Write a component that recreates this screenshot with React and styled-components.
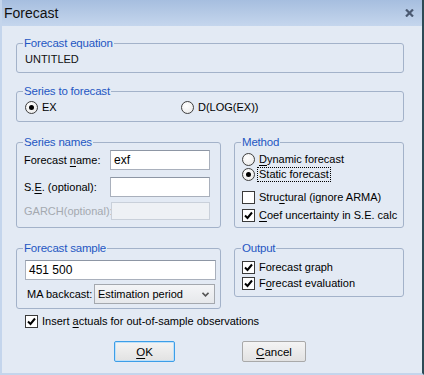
import React from "react";
import styled, { createGlobalStyle } from "styled-components";

const GlobalStyle = createGlobalStyle`
  html, body {
    margin: 0;
    padding: 0;
    background: #e3eaf4;
  }
  body {
    font-family: "Liberation Sans", Arial, sans-serif;
    font-size: 11px;
    color: #000;
  }
  * {
    box-sizing: border-box;
  }
`;

const Window = styled.div`
  width: 424px;
  height: 375px;
  display: flex;
  flex-direction: column;
  background: #e3eaf4;
  border-left: 2px solid #c4d5ec;
  border-right: 2px solid #2d4a55;
  border-bottom: 2px solid #c4d5ec;
  overflow: hidden;
`;

const TitleBar = styled.div`
  height: 26px;
  flex: none;
  display: flex;
  align-items: center;
  justify-content: space-between;
  padding: 0 8px 0 2px;
  background: linear-gradient(#a6bedf, #c5d6ed);
  font-size: 14px;
  color: #111;
`;

const Body = styled.div`
  display: flex;
  flex-direction: column;
  padding: 10px 18px 0 14px;
`;

const Group = styled.fieldset`
  margin: 0;
  padding: 0;
  min-width: 0;
  width: ${(p) => p.$width || "auto"};
  border: 1px solid #a3b2c9;
  border-radius: 3px;
  margin-top: ${(p) => p.$top || 0}px;
  align-self: flex-start;
`;

const Legend = styled.legend`
  margin-left: 6px;
  padding: 0 1px;
  line-height: 14px;
  font-size: 11.5px;
  color: #1f57c3;
  letter-spacing: -0.2px;
`;

const Inner = styled.div`
  display: flex;
  flex-direction: column;
  padding: ${(p) => p.$pad};
`;

const Row = styled.div`
  display: flex;
  align-items: center;
  height: ${(p) => p.$h || 15}px;
  margin-top: ${(p) => p.$mt || 0}px;
  padding-left: ${(p) => p.$pl || 0}px;
`;

const Plain = styled.div`
  line-height: 13px;
  color: #111;
`;

const FieldLabel = styled.label`
  width: ${(p) => p.$w}px;
  flex: none;
  padding-left: ${(p) => p.$pl || 0}px;
  color: ${(p) => (p.$disabled ? "#a4a9b0" : "#000")};
  white-space: nowrap;
`;

const TextBox = styled.div`
  width: ${(p) => p.$w}px;
  height: ${(p) => p.$h || 20}px;
  background: ${(p) => (p.$disabled ? "#eef1f5" : "#fff")};
  border: 1px solid ${(p) => (p.$disabled ? "#c9d0da" : "#a9b0bc")};
  border-top-color: ${(p) => (p.$disabled ? "#c9d0da" : "#8d96a4")};
  padding: 0 3px;
  display: flex;
  align-items: center;
  font-size: 12px;
  line-height: 14px;
`;

const Select = styled.div`
  width: 121px;
  height: 20px;
  background: linear-gradient(#f4f5f7, #e6e8eb);
  border: 1px solid #a4a8ae;
  display: flex;
  align-items: center;
  justify-content: space-between;
  padding: 0 5px 0 3px;
  font-size: 11px;
`;

const RadioCircle = styled.span`
  width: 13px;
  height: 13px;
  flex: none;
  border-radius: 50%;
  border: 1px solid #3e3e3e;
  background: radial-gradient(circle at 40% 35%, #fff, #e6e6e6);
  display: flex;
  align-items: center;
  justify-content: center;
  margin-right: 3px;
  &::after {
    content: "";
    width: 5px;
    height: 5px;
    border-radius: 50%;
    background: #000;
    display: ${(p) => (p.$on ? "block" : "none")};
  }
`;

const CheckSquare = styled.span`
  width: 13px;
  height: 13px;
  flex: none;
  border: 1px solid #3a3a3a;
  background: #fff;
  display: flex;
  align-items: center;
  justify-content: center;
  margin-right: 3px;
`;

const Opt = styled.span`
  display: flex;
  align-items: center;
  width: ${(p) => (p.$w ? p.$w + "px" : "auto")};
  white-space: nowrap;
`;

const Caption = styled.span`
  padding: 0 1px;
  outline: ${(p) => (p.$focus ? "1px dotted #000" : "none")};
  line-height: 13px;
`;

const Columns = styled.div`
  display: flex;
  align-items: flex-start;
  gap: 13px;
  margin-top: ${(p) => p.$top}px;
`;

const Buttons = styled.div`
  display: flex;
  gap: 67px;
  padding-left: 98px;
  margin-top: 13px;
`;

const Button = styled.div`
  width: ${(p) => p.$w}px;
  height: 21px;
  display: flex;
  align-items: center;
  justify-content: center;
  border: 1px solid ${(p) => (p.$default ? "#3c9ee8" : "#a9a9a9")};
  border-radius: 2px;
  background: linear-gradient(#f4f4f4, #e2e2e2);
  box-shadow: ${(p) => (p.$default ? "inset 0 0 0 1px #bfe0f8" : "none")};
  font-size: 11.5px;
`;

const U = styled.u`
  text-decoration-thickness: 1px;
  text-underline-offset: 2px;
`;

const Radio = ({ on, children, w, focus }) => (
  <Opt $w={w}>
    <RadioCircle $on={on} />
    <Caption $focus={focus}>{children}</Caption>
  </Opt>
);

const Check = ({ on, children }) => (
  <Opt>
    <CheckSquare>
      {on && (
        <svg width="9" height="9" viewBox="0 0 9 9">
          <path d="M1 4.5 L3.5 7 L8 1.5" fill="none" stroke="#000" strokeWidth="2" />
        </svg>
      )}
    </CheckSquare>
    <Caption>{children}</Caption>
  </Opt>
);

export default function App() {
  return (
    <>
      <GlobalStyle />
      <Window>
        <TitleBar>
          <span>Forecast</span>
          <svg width="9" height="8" viewBox="0 0 9 8">
            <path d="M1 0.5 L8 7.5 M8 0.5 L1 7.5" stroke="#4b5a72" strokeWidth="2.2" />
          </svg>
        </TitleBar>
        <Body>
          <Group $width="388px">
            <Legend>Forecast equation</Legend>
            <Inner $pad="3px 8px 6px 8px">
              <Plain>UNTITLED</Plain>
            </Inner>
          </Group>

          <Group $width="388px" $top={11}>
            <Legend>Series to forecast</Legend>
            <Inner $pad="3px 8px 7px 8px">
              <Row $h={13}>
                <Radio on w={156}>EX</Radio>
                <Radio>D(LOG(EX))</Radio>
              </Row>
            </Inner>
          </Group>

          <Columns $top={13}>
            <Group $width="205px">
              <Legend>Series names</Legend>
              <Inner $pad="1px 0 7px 7px">
                <Row $h={20}>
                  <FieldLabel $w={86}>
                    Forecast <U>n</U>ame:
                  </FieldLabel>
                  <TextBox $w={100}>exf</TextBox>
                </Row>
                <Row $h={20} $mt={7}>
                  <FieldLabel $w={86}>
                    S.<U>E</U>. (optional):
                  </FieldLabel>
                  <TextBox $w={100} />
                </Row>
                <Row $h={18} $mt={5}>
                  <FieldLabel $w={87} $disabled>
                    GARCH(optional):
                  </FieldLabel>
                  <TextBox $w={99} $h={18} $disabled />
                </Row>
              </Inner>
            </Group>

            <Group $width="170px">
              <Legend>Method</Legend>
              <Inner $pad="3px 0 4px 7px">
                <Row>
                  <Radio>
                    <U>D</U>ynamic forecast
                  </Radio>
                </Row>
                <Row>
                  <Radio on focus>
                    Static forecast
                  </Radio>
                </Row>
                <Row $mt={8}>
                  <Check>
                    Stru<U>c</U>tural (ignore ARMA)
                  </Check>
                </Row>
                <Row $mt={3}>
                  <Check on>
                    <U>C</U>oef uncertainty in S.E. calc
                  </Check>
                </Row>
              </Inner>
            </Group>
          </Columns>

          <Columns $top={13}>
            <Group $width="205px">
              <Legend>Forecast sample</Legend>
              <Inner $pad="5px 0 4px 8px">
                <TextBox $w={191}>451 500</TextBox>
                <Row $h={20} $mt={4}>
                  <FieldLabel $w={69} $pl={2}>
                    MA backcast:
                  </FieldLabel>
                  <Select>
                    <span>Estimation period</span>
                    <svg width="7" height="5" viewBox="0 0 7 5">
                      <path d="M0.5 0.8 L3.5 3.8 L6.5 0.8" fill="none" stroke="#555" strokeWidth="1.6" />
                    </svg>
                  </Select>
                </Row>
              </Inner>
            </Group>

            <Group $width="170px">
              <Legend>Output</Legend>
              <Inner $pad="4px 0 5px 7px">
                <Row $h={16}>
                  <Check on>Forecast graph</Check>
                </Row>
                <Row $h={16}>
                  <Check on>
                    F<U>o</U>recast evaluation
                  </Check>
                </Row>
              </Inner>
            </Group>
          </Columns>

          <Row $h={13} $mt={6} $pl={9}>
            <Check on>
              Insert <U>a</U>ctuals for out-of-sample observations
            </Check>
          </Row>

          <Buttons>
            <Button $w={61} $default>
              <U>O</U>K
            </Button>
            <Button $w={64}>
              <U>C</U>ancel
            </Button>
          </Buttons>
        </Body>
      </Window>
    </>
  );
}
